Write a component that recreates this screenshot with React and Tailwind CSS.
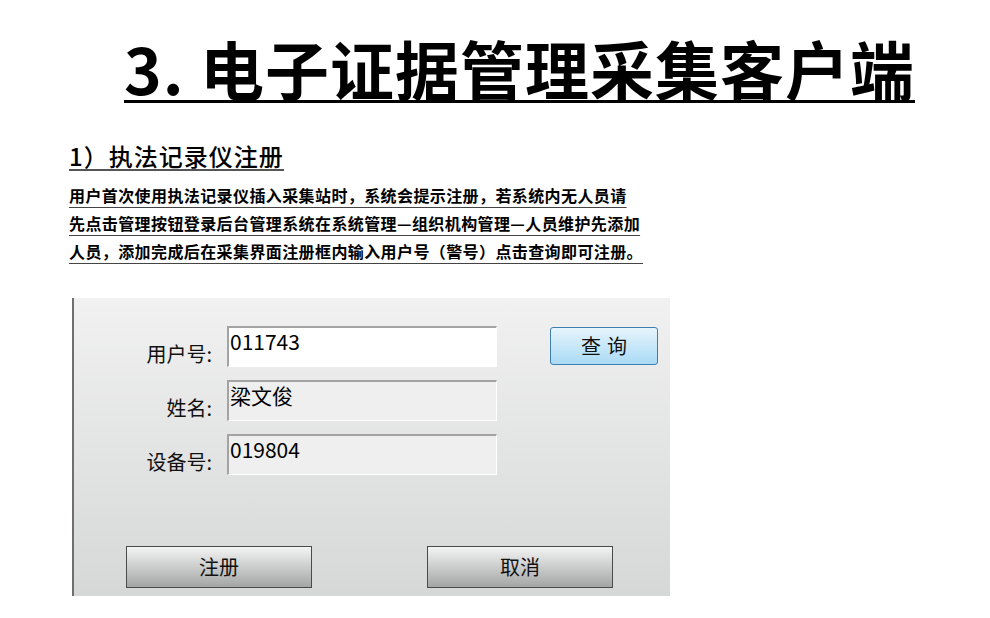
export default function App() {
  const font = { fontFamily: '"Noto Sans CJK SC", "Noto Sans", sans-serif' };
  const fields = [
    { label: "用户号:", value: "011743", editable: true },
    { label: "姓名:", value: "梁文俊" },
    { label: "设备号:", value: "019804" },
  ];

  return (
    <div className="w-[990px] h-[618px] bg-white overflow-hidden text-black" style={font}>
      {/* Title */}
      <div className="pt-[34px] pl-[124px]">
        <span className="inline-block text-[64px] font-bold leading-[66px] tracking-[1px] border-b-[3px] border-black">
          3. 电子证据管理采集客户端
        </span>
      </div>

      {/* Section */}
      <div className="pl-[69px] mt-[40px]">
        <span className="inline-block text-[24px] font-medium leading-[26px] tracking-[1px] border-b-2 border-[#555]">
          1）执法记录仪注册
        </span>
        <div className="mt-[10px] text-[16px] font-bold leading-[28px] tracking-[0.4px]">
          <div className="underline underline-offset-[5px] decoration-[#444]">
            用户首次使用执法记录仪插入采集站时，系统会提示注册，若系统内无人员请
          </div>
          <div className="underline underline-offset-[5px] decoration-[#444]">
            先点击管理按钮登录后台管理系统在系统管理—组织机构管理—人员维护先添加
          </div>
          <div className="underline underline-offset-[5px] decoration-[#444]">
            人员，添加完成后在采集界面注册框内输入用户号（警号）点击查询即可注册。
          </div>
        </div>
      </div>

      {/* Dialog */}
      <div className="ml-[72px] mt-[33px] w-[598px] h-[298px] border-l-2 border-[#6f6f6f] bg-gradient-to-b from-[#f1f1f1] to-[#d6d7d7] flex flex-col pt-[28px]">
        <div className="flex">
          <div className="flex flex-col gap-[13px]">
            {fields.map((f) => (
              <div key={f.label} className="flex items-end h-[41px]">
                <div className="w-[138px] text-right text-[20px] leading-[26px] text-[#111]">
                  {f.label}
                </div>
                <div
                  className={
                    "ml-[15px] w-[270px] h-[41px] border-t-2 border-l-2 border-t-[#a3a3a3] border-l-[#a3a3a3] border-r border-b border-r-white border-b-white px-[1px] text-[21px] leading-[26px] " +
                    (f.editable ? "bg-white" : "bg-[#efefef]")
                  }
                >
                  {f.value}
                </div>
              </div>
            ))}
          </div>
          <div className="ml-[53px] mt-[1px]">
            <button className="w-[108px] h-[38px] rounded-[3px] border border-[#3c7fb1] bg-gradient-to-b from-[#e6f4fc] to-[#a9daf5] text-[20px] tracking-[6px] pl-[6px] leading-none text-[#111]">
              查询
            </button>
          </div>
        </div>

        <div className="flex mt-[71px] pl-[52px] gap-[115px]">
          <button className="w-[186px] h-[42px] border border-[#4a4a4a] bg-gradient-to-b from-[#f4f4f4] to-[#a4a6a6] text-[20px] text-[#111]">
            注册
          </button>
          <button className="w-[186px] h-[42px] border border-[#4a4a4a] bg-gradient-to-b from-[#f4f4f4] to-[#a4a6a6] text-[20px] text-[#111]">
            取消
          </button>
        </div>
      </div>
    </div>
  );
}
